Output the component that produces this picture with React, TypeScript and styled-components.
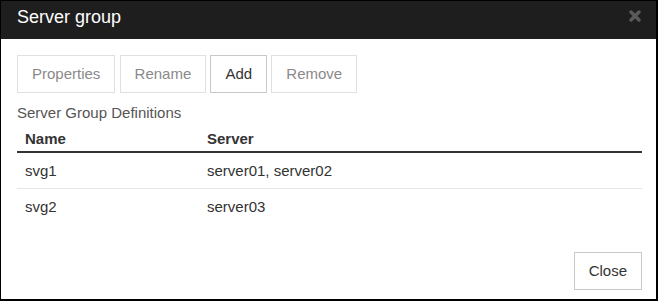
import React from "react";
import styled, { createGlobalStyle } from "styled-components";

const GlobalStyle = createGlobalStyle`
  html, body {
    margin: 0;
    padding: 0;
    background: #fff;
  }
  body {
    font-family: "Liberation Sans", Arial, Helvetica, sans-serif;
    color: #333;
  }
  * { box-sizing: border-box; }
`;

const Dialog = styled.div`
  width: 658px;
  height: 301px;
  border-style: solid;
  border-color: #000;
  border-width: 1px 2px 2px 1px;
  background: #fff;
  display: flex;
  flex-direction: column;
`;

const TitleBar = styled.div`
  height: 38px;
  flex: none;
  background: #1e1e1e;
  display: flex;
  align-items: flex-start;
  justify-content: space-between;
  padding: 6px 15px 0 16px;
`;

const Title = styled.h4`
  margin: 0;
  font-size: 18px;
  line-height: 20px;
  font-weight: normal;
  color: #fff;
`;

const CloseX = styled.button`
  margin-top: 3px;
  width: 12px;
  height: 12px;
  padding: 0;
  border: 0;
  background: transparent;
  display: block;
  cursor: pointer;
  svg { display: block; }
`;

const Body = styled.div`
  flex: 1;
  display: flex;
  flex-direction: column;
  padding: 16px 14px 9px 16px;
`;

const Toolbar = styled.div`
  display: flex;
  gap: 4.2px;
`;

const Button = styled.button`
  height: 38px;
  padding: 0 14px;
  font-family: inherit;
  font-size: 15px;
  line-height: 20px;
  background: #fff;
  color: #333;
  border: 1px solid #c9c9c9;
  border-radius: 0;
  cursor: pointer;
  &:disabled {
    color: #8a8a8a;
    border-color: #e0e0e0;
    cursor: default;
  }
`;

const SectionLabel = styled.div`
  margin-top: 10px;
  font-size: 15px;
  line-height: 20px;
  color: #555;
`;

const Table = styled.table`
  width: 100%;
  border-collapse: separate;
  border-spacing: 0;
`;

const Th = styled.th<{ $w?: number }>`
  text-align: left;
  font-size: 15px;
  font-weight: bold;
  line-height: 20px;
  color: #333;
  padding: 6px 8px 2px;
  border-bottom: 2px solid #333;
  width: ${(p) => (p.$w ? `${p.$w}px` : "auto")};
`;

const Row = styled.tr`
  & + & td {
    border-top: 1px solid #e6e6e6;
  }
`;

const Td = styled.td`
  font-size: 15px;
  line-height: 20px;
  color: #333;
  padding: 8px 8px 7px;
`;

const Footer = styled.div`
  margin-top: auto;
  display: flex;
  justify-content: flex-end;
`;

const rows = [
  { name: "svg1", server: "server01, server02" },
  { name: "svg2", server: "server03" },
];

export default function App() {
  return (
    <>
      <GlobalStyle />
      <Dialog>
        <TitleBar>
          <Title>Server group</Title>
          <CloseX aria-label="Close">
            <svg width="12" height="12" viewBox="0 0 12 12">
              <path
                d="M2 2 L10 10 M10 2 L2 10"
                stroke="#5a5a5a"
                strokeWidth="3.4"
                strokeLinecap="round"
              />
            </svg>
          </CloseX>
        </TitleBar>
        <Body>
          <Toolbar>
            <Button disabled>Properties</Button>
            <Button disabled>Rename</Button>
            <Button>Add</Button>
            <Button disabled>Remove</Button>
          </Toolbar>
          <SectionLabel>Server Group Definitions</SectionLabel>
          <Table>
            <thead>
              <tr>
                <Th $w={182}>Name</Th>
                <Th>Server</Th>
              </tr>
            </thead>
            <tbody>
              {rows.map((r) => (
                <Row key={r.name}>
                  <Td>{r.name}</Td>
                  <Td>{r.server}</Td>
                </Row>
              ))}
            </tbody>
          </Table>
          <Footer>
            <Button>Close</Button>
          </Footer>
        </Body>
      </Dialog>
    </>
  );
}
